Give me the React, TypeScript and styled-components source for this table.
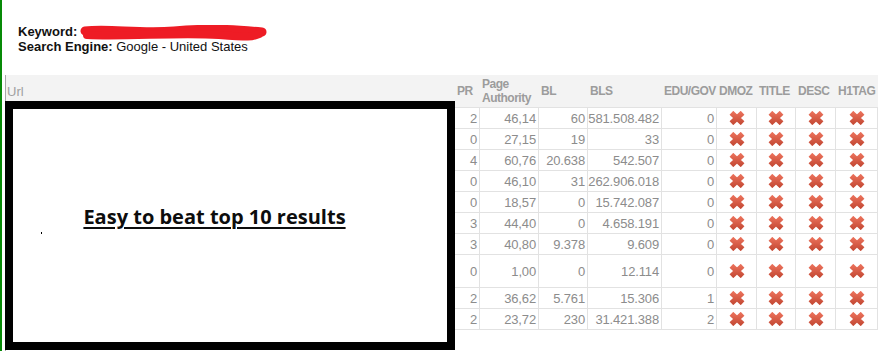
import React from "react";
import styled, { createGlobalStyle } from "styled-components";

const GlobalStyle = createGlobalStyle`
  html, body {
    margin: 0;
    padding: 0;
    background: #fff;
  }
  body {
    font-family: "Liberation Sans", Arial, sans-serif;
  }
  * {
    box-sizing: border-box;
  }
`;

const COLUMNS = "449px 25px 59px 49px 74px 55px 40px 39px 40px 42px";

interface RowData {
  pr: string;
  pa: string;
  bl: string;
  bls: string;
  edu: string;
  tall?: boolean;
}

const rows: RowData[] = [
  { pr: "2", pa: "46,14", bl: "60", bls: "581.508.482", edu: "0" },
  { pr: "0", pa: "27,15", bl: "19", bls: "33", edu: "0" },
  { pr: "4", pa: "60,76", bl: "20.638", bls: "542.507", edu: "0" },
  { pr: "0", pa: "46,10", bl: "31", bls: "262.906.018", edu: "0" },
  { pr: "0", pa: "18,57", bl: "0", bls: "15.742.087", edu: "0" },
  { pr: "3", pa: "44,40", bl: "0", bls: "4.658.191", edu: "0" },
  { pr: "3", pa: "40,80", bl: "9.378", bls: "9.609", edu: "0" },
  { pr: "0", pa: "1,00", bl: "0", bls: "12.114", edu: "0", tall: true },
  { pr: "2", pa: "36,62", bl: "5.761", bls: "15.306", edu: "1" },
  { pr: "2", pa: "23,72", bl: "230", bls: "31.421.388", edu: "2" },
];

const headers = ["PR", "Page Authority", "BL", "BLS", "EDU/GOV", "DMOZ", "TITLE", "DESC", "H1TAG"];

// red "x" used for the failed on-page checks
const CrossIcon = () => (
  <svg width="16" height="14" viewBox="0 0 16 14">
    <defs>
      <linearGradient id="xg" x1="0" y1="0" x2="0" y2="1">
        <stop offset="0" stopColor="#e86e58" />
        <stop offset="1" stopColor="#c74c37" />
      </linearGradient>
    </defs>
    <path d="M2.4 1.8 L13.6 12.2 M13.6 1.8 L2.4 12.2" stroke="url(#xg)" strokeWidth="5.4" fill="none" />
  </svg>
);

const Scribble = () => (
  <RedactSvg width="190" height="16" viewBox="0 0 190 16">
    <path
      d="M6 6 C 30 3, 60 9, 95 6 S 150 4, 183 7"
      stroke="#ee1c25"
      strokeWidth="9"
      strokeLinecap="round"
      fill="none"
    />
    <path
      d="M8 10 C 50 12, 100 7, 140 10 S 172 11, 180 9"
      stroke="#ee1c25"
      strokeWidth="8"
      strokeLinecap="round"
      fill="none"
    />
  </RedactSvg>
);

const App = () => {
  return (
    <>
      <GlobalStyle />
      <Page>
        <Info>
          <Line>
            <b>Keyword:</b> <Scribble />
          </Line>
          <Line>
            <b>Search Engine:</b> Google - United States
          </Line>
        </Info>
        <Panel>
          <HeadRow>
            <UrlHead>Url</UrlHead>
            {headers.map((h) => (
              <HeadCell key={h}>{h}</HeadCell>
            ))}
          </HeadRow>
          {rows.map((r, i) => (
            <Row key={i} $tall={r.tall}>
              <Cell />
              <NumCell>{r.pr}</NumCell>
              <NumCell>{r.pa}</NumCell>
              <NumCell>{r.bl}</NumCell>
              <NumCell>{r.bls}</NumCell>
              <NumCell>{r.edu}</NumCell>
              <IconCell><CrossIcon /></IconCell>
              <IconCell><CrossIcon /></IconCell>
              <IconCell><CrossIcon /></IconCell>
              <IconCell><CrossIcon /></IconCell>
            </Row>
          ))}
        </Panel>
        <Callout>
          <CalloutText>Easy to beat top 10 results</CalloutText>
          <Speck />
        </Callout>
      </Page>
    </>
  );
};

const Page = styled.div`
  position: relative;
  height: 351px;
  overflow: hidden;
  border-left: 2px solid #078a07;
`;

const Info = styled.div`
  padding: 24px 0 0 16px;
  font-size: 13px;
  color: #111;
`;

const Line = styled.div`
  height: 15px;
  line-height: 15px;
  white-space: nowrap;
`;

const RedactSvg = styled.svg`
  vertical-align: top;
  margin-left: -2px;
  margin-top: 1px;
`;

const Panel = styled.div`
  margin: 21px 0 0 3px;
  border-left: 1px solid #a8a8a8;
  height: 300px;
  width: 873px;
`;

const HeadRow = styled.div`
  display: grid;
  grid-template-columns: ${COLUMNS};
  height: 33px;
  background: #f3f3f3;
  border-bottom: 1px solid #e2e2e2;
  align-items: center;
`;

const UrlHead = styled.div`
  padding-left: 1px;
  font-size: 13px;
  color: #a0a0a0;
`;

const HeadCell = styled.div`
  padding-left: 2px;
  font-size: 12px;
  letter-spacing: -0.5px;
  font-weight: bold;
  line-height: 14px;
  color: #9c9c9c;
  white-space: normal;
`;

const Row = styled.div<{ $tall?: boolean }>`
  display: grid;
  grid-template-columns: ${COLUMNS};
  height: ${(p) => (p.$tall ? "33px" : "21px")};
  border-bottom: 1px solid #e2e2e2;
`;

const Cell = styled.div`
  border-right: 1px solid #e2e2e2;
  display: flex;
  align-items: center;
`;

const NumCell = styled(Cell)`
  justify-content: flex-end;
  padding-right: 2px;
  font-size: 13px;
  letter-spacing: -0.15px;
  color: #8c8c8c;
  white-space: nowrap;
`;

const IconCell = styled(Cell)`
  justify-content: center;
  svg {
    display: block;
  }
`;

const Callout = styled.div`
  position: absolute;
  left: 3px;
  top: 101px;
  width: 450px;
  height: 249px;
  border: 8px solid #000;
  background: #fff;
  display: flex;
  align-items: center;
  justify-content: center;
  padding: 0 31px 18px 0;
`;

const CalloutText = styled.span`
  font-family: "Open Sans", "Liberation Sans", sans-serif;
  font-weight: 700;
  font-size: 20px;
  color: #0d0d0d;
  text-decoration: underline;
  text-decoration-thickness: 2px;
  text-underline-offset: 3px;
  white-space: nowrap;
`;

const Speck = styled.i`
  position: absolute;
  left: 28px;
  top: 123px;
  width: 1px;
  height: 2px;
  background: #000;
`;

export default App;
